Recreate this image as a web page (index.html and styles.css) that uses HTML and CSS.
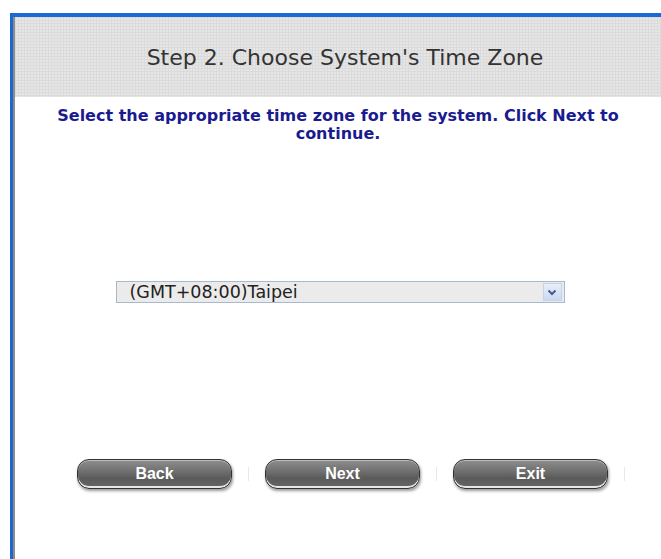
FILE: index.html
```html
<!DOCTYPE html>
<html>
<head>
<meta charset="utf-8">
<title>Setup Wizard</title>
<link rel="stylesheet" href="styles.css">
</head>
<body>
<div class="frame">
  <div class="panel">
    <div class="panel-head">
      <h1 class="title">Step 2. Choose System's Time Zone</h1>
    </div>
    <p class="lead">Select the appropriate time zone for the system. Click Next to continue.</p>
    <div class="zone-row">
      <div class="select">
        <span class="select-value">(GMT+08:00)Taipei</span>
        <span class="select-btn">
          <svg width="10" height="7" viewBox="0 0 10 7"><path d="M1.5 1.5 L5 5 L8.5 1.5" fill="none" stroke="#4a5e82" stroke-width="2"/></svg>
        </span>
      </div>
    </div>
    <div class="actions">
      <button class="pill">Back</button>
      <span class="sep"></span>
      <button class="pill">Next</button>
      <span class="sep"></span>
      <button class="pill">Exit</button>
      <span class="sep"></span>
    </div>
  </div>
</div>
</body>
</html>
```

FILE: styles.css
```css
html, body {
  margin: 0;
  padding: 0;
  background: #fff;
}

.frame {
  padding: 13px 0 0 10px;
  height: 546px;
}

.panel {
  height: 100%;
  border-top: 4px solid #1c67d8;
  border-left: 3px solid #1c67d8;
  box-shadow: inset 2px 0 0 #8c8c84;
  font-family: "DejaVu Sans", Verdana, sans-serif;
}

/* dotted grey header band */
.panel-head {
  margin-left: 2px;
  height: 80px;
  display: flex;
  align-items: center;
  justify-content: center;
  background-color: #e6e6e6;
  background-image:
    linear-gradient(90deg, #dbdbdb 1px, transparent 1px),
    linear-gradient(#dbdbdb 1px, transparent 1px);
  background-size: 3px 3px;
}

.title {
  margin: 0;
  padding-left: 14px;
  font-size: 22px;
  font-weight: normal;
  color: #333;
}

.lead {
  margin: 10px 0 0 2px;
  padding: 0 32px;
  text-align: center;
  font-size: 16px;
  font-weight: bold;
  line-height: 18px;
  color: #1b1b90;
}

.zone-row {
  margin-top: 138px;
  display: flex;
  justify-content: center;
  padding-left: 6px;
}

.select {
  width: 447px;
  height: 20px;
  border: 1px solid #a9b9cd;
  background: #ebebeb;
  display: flex;
  align-items: center;
  justify-content: space-between;
}

.select-value {
  padding-left: 13px;
  font-size: 17.5px;
  color: #222;
}

.select-btn {
  width: 17px;
  height: 16px;
  margin-right: 2px;
  border: 1px solid #c3d3ea;
  background: linear-gradient(#e8effb, #cbd9f1);
  display: flex;
  align-items: center;
  justify-content: center;
}

.actions {
  margin-top: 156px;
  display: flex;
  align-items: center;
  justify-content: center;
  gap: 16px;
  padding-left: 28px;
}

.pill {
  width: 155px;
  height: 30px;
  border: 1px solid #333;
  border-radius: 12px;
  background: linear-gradient(#8e8e8e 0%, #707070 40%, #5a5a5a 65%, #666 100%);
  box-shadow: inset 0 1px 0 #bdbdbd, inset 0 -2px 0 #e6e6e6, 1px 2px 3px rgba(0,0,0,0.4);
  color: #fff;
  font-family: "Liberation Sans", Arial, sans-serif;
  font-size: 16px;
  font-weight: bold;
  padding: 0;
}

.sep {
  width: 1px;
  height: 14px;
  background: #e8e8e8;
}
```
